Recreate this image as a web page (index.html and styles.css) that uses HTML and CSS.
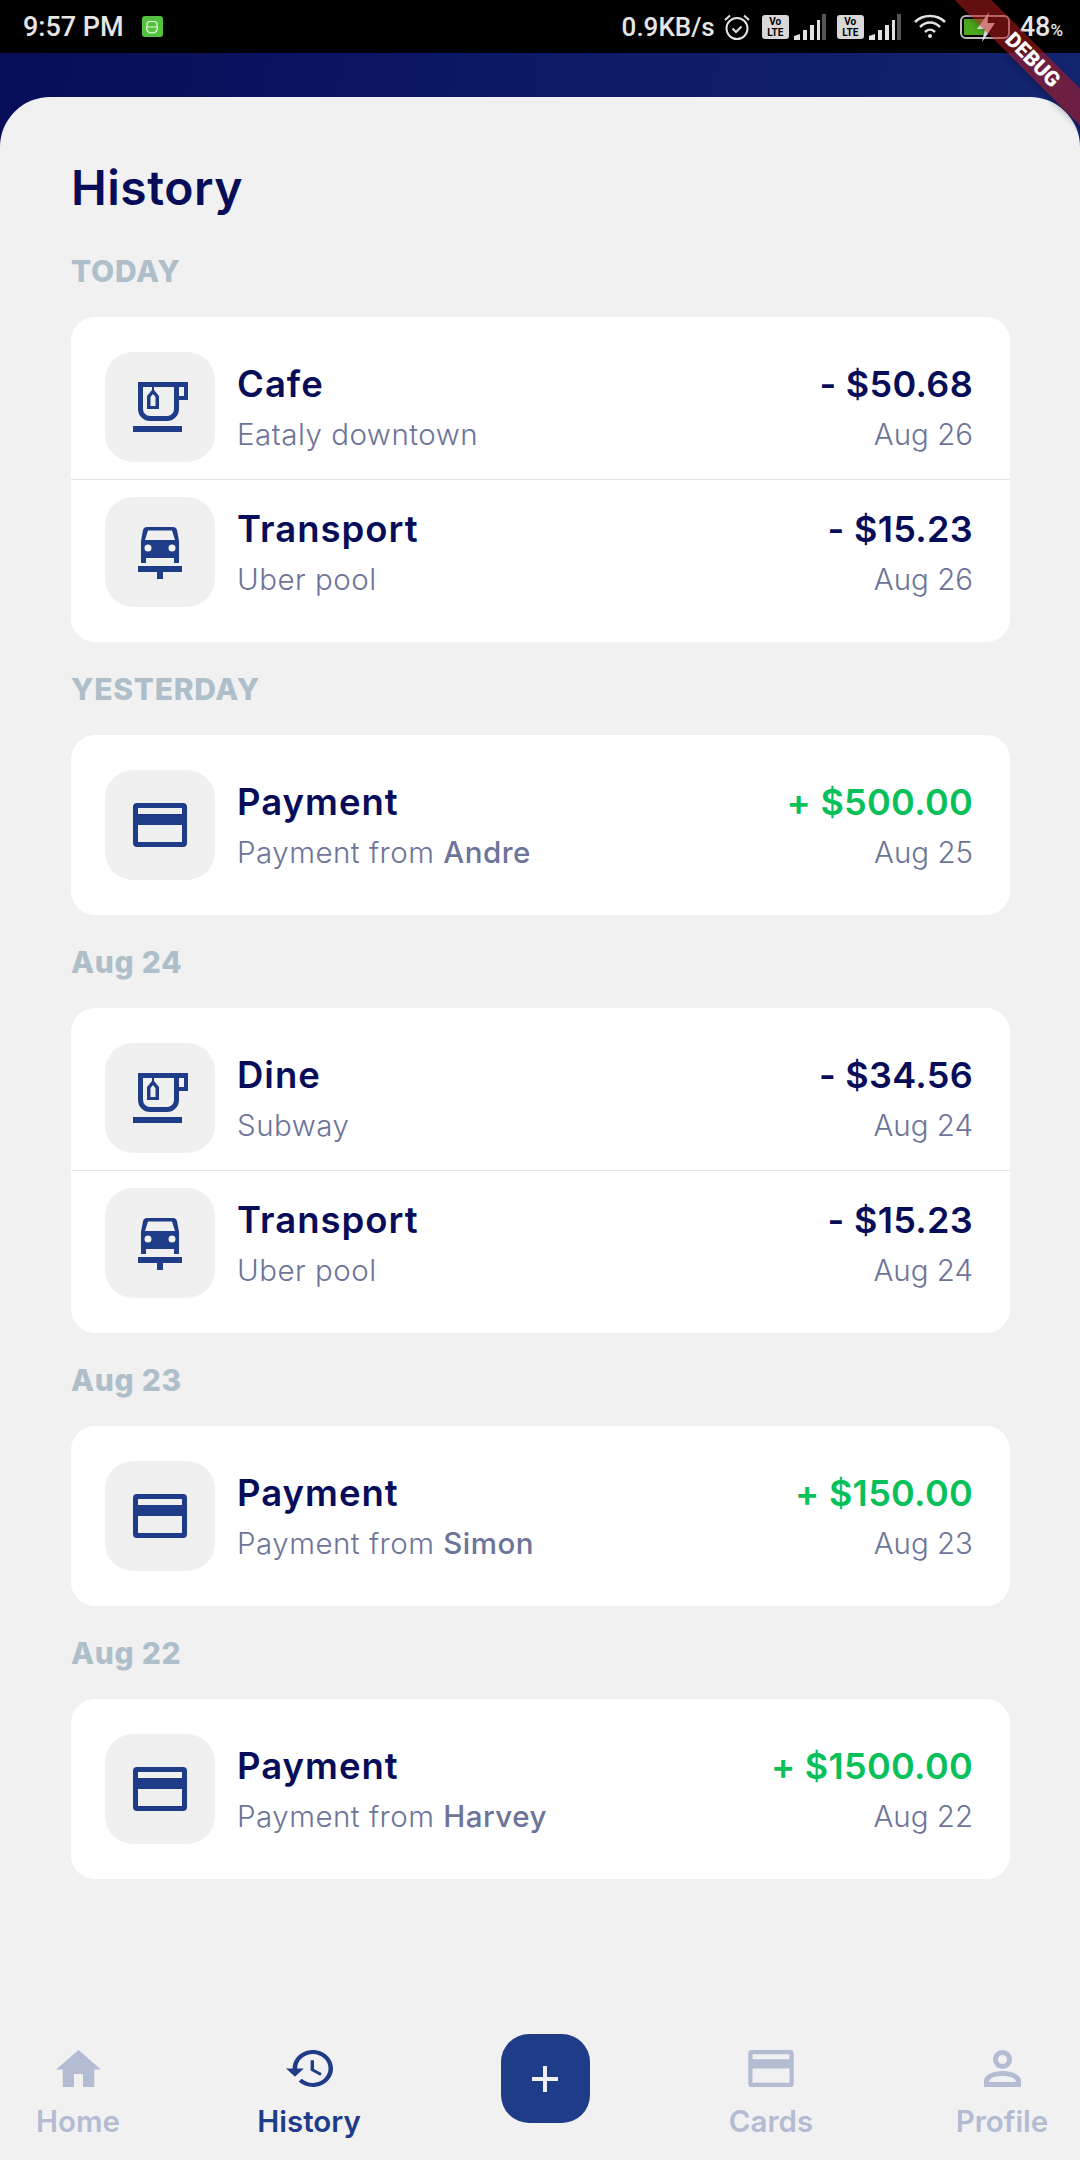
FILE: index.html
```html
<!DOCTYPE html>
<html lang="en">
<head>
    <meta charset="UTF-8">
    <meta name="viewport" content="width=device-width, initial-scale=1.0">
    <title>History</title>
    <link rel="stylesheet" href="styles.css">
</head>
<body>

    <svg class="icon-defs" width="0" height="0">
        <symbol id="icon-cup" viewBox="0 0 110 110">
            <path fill-rule="evenodd" d="M33 30H83V48H74V57A12 12 0 0 1 62 69H45A12 12 0 0 1 33 57ZM38 35V57A7 7 0 0 0 45 64H62A7 7 0 0 0 69 57V35ZM74 35V44H79V35Z"/>
            <path fill-rule="evenodd" d="M47 35H49V38L54 44V57H42V44L47 38ZM48 42L45.500 45V54H50.500V45Z"/>
            <rect x="28" y="74" width="49" height="6"/>
        </symbol>
        <symbol id="icon-car" viewBox="0 0 110 110">
            <path fill-rule="evenodd" d="M42 30H68Q71 30 72 33L74 44V66H69V61H41V66H36V44L38 33Q39 30 42 30ZM43 33.500 40 43H70L67 33.500ZM43 47.500A3.500 3.500 0 1 0 43 54.500A3.500 3.500 0 1 0 43 47.500ZM67 47.500A3.500 3.500 0 1 0 67 54.500A3.500 3.500 0 1 0 67 47.500Z"/>
            <rect x="33" y="69" width="44" height="6"/>
            <rect x="52" y="75" width="6" height="7"/>
        </symbol>
        <symbol id="icon-card" viewBox="28 33 54 44">
            <path fill-rule="evenodd" d="M32 33H78A4 4 0 0 1 82 37V73A4 4 0 0 1 78 77H32A4 4 0 0 1 28 73V37A4 4 0 0 1 32 33ZM33 38V44H77V38ZM33 55V72H77V55Z"/>
        </symbol>
    </svg>

    <div class="status-bar">
        <span class="status-time">9:57 PM</span>
        <span class="app-badge">
            <svg width="14" height="14" viewBox="0 0 14 14" fill="none" stroke="#e8f8e0" stroke-width="1.200"><path d="M2 7V3L4 1.500H10L12 3V7M1.500 7H12.500C12.500 11 10 13 7 13S1.500 11 1.500 7Z"/></svg>
        </span>
        <span class="status-speed">0.9KB/s</span>
        <svg class="status-alarm" width="28" height="28" viewBox="0 0 28 28" fill="none" stroke="#e2e2e2" stroke-width="2"><circle cx="14" cy="15.500" r="10.500"/><path d="M9.500 15.500 13 19 18.500 13.500M2 7 7 2.500M26 7 21 2.500"/></svg>
        <span class="volte">Vo<br>LTE</span>
        <svg class="signal" width="32" height="26" viewBox="0 0 32 26"><path fill="#e2e2e2" d="M0 26V22L6 20V26ZM9 26V16H13V26ZM16 26V11H20V26ZM23 26V6H26V26Z"/><rect x="28" y="0" width="4" height="26" fill="#555"/></svg>
        <span class="volte">Vo<br>LTE</span>
        <svg class="signal" width="32" height="26" viewBox="0 0 32 26"><path fill="#e2e2e2" d="M0 26V22L6 20V26ZM9 26V16H13V26ZM16 26V11H20V26ZM23 26V6H26V26Z"/><rect x="28" y="0" width="4" height="26" fill="#555"/></svg>
        <svg class="status-wifi" width="34" height="28" viewBox="0 0 34 28" fill="none" stroke="#e2e2e2" stroke-width="2.500"><path d="M1 9C9 1 23 1 31 9M6 14C12 8 20 8 26 14M11 19C14 16 18 16 21 19"/><circle cx="16" cy="23" r="2" fill="#e2e2e2" stroke="none"/></svg>
        <span class="battery">
            <span class="battery-fill"></span>
            <svg class="battery-bolt" width="20" height="30" viewBox="0 0 20 30"><path fill="#f2f2f2" d="M13 0 1 17H9L6 30 19 11H11Z"/></svg>
        </span>
        <span class="status-level">48<small>%</small></span>
    </div>

    <div class="debug-banner"><span>DEBUG</span></div>

    <div class="app-top">
        <main class="sheet">
            <h1>History</h1>

            <section class="day">
                <h2>TODAY</h2>
                <div class="card">
                    <div class="row first">
                        <div class="row-icon"><svg><use href="#icon-cup"/></svg></div>
                        <div class="row-text"><div class="row-title">Cafe</div><div class="row-sub">Eataly downtown</div></div>
                        <div class="row-right"><div class="amount">- $50.68</div><div class="row-sub">Aug 26</div></div>
                    </div>
                    <div class="row last">
                        <div class="row-icon"><svg><use href="#icon-car"/></svg></div>
                        <div class="row-text"><div class="row-title">Transport</div><div class="row-sub">Uber pool</div></div>
                        <div class="row-right"><div class="amount">- $15.23</div><div class="row-sub">Aug 26</div></div>
                    </div>
                </div>
            </section>

            <section class="day">
                <h2>YESTERDAY</h2>
                <div class="card">
                    <div class="row only">
                        <div class="row-icon"><svg class="card-glyph"><use href="#icon-card"/></svg></div>
                        <div class="row-text"><div class="row-title">Payment</div><div class="row-sub">Payment from <b>Andre</b></div></div>
                        <div class="row-right"><div class="amount plus">+ $500.00</div><div class="row-sub">Aug 25</div></div>
                    </div>
                </div>
            </section>

            <section class="day">
                <h2>Aug 24</h2>
                <div class="card">
                    <div class="row first">
                        <div class="row-icon"><svg><use href="#icon-cup"/></svg></div>
                        <div class="row-text"><div class="row-title">Dine</div><div class="row-sub">Subway</div></div>
                        <div class="row-right"><div class="amount">- $34.56</div><div class="row-sub">Aug 24</div></div>
                    </div>
                    <div class="row last">
                        <div class="row-icon"><svg><use href="#icon-car"/></svg></div>
                        <div class="row-text"><div class="row-title">Transport</div><div class="row-sub">Uber pool</div></div>
                        <div class="row-right"><div class="amount">- $15.23</div><div class="row-sub">Aug 24</div></div>
                    </div>
                </div>
            </section>

            <section class="day">
                <h2>Aug 23</h2>
                <div class="card">
                    <div class="row only">
                        <div class="row-icon"><svg class="card-glyph"><use href="#icon-card"/></svg></div>
                        <div class="row-text"><div class="row-title">Payment</div><div class="row-sub">Payment from <b>Simon</b></div></div>
                        <div class="row-right"><div class="amount plus">+ $150.00</div><div class="row-sub">Aug 23</div></div>
                    </div>
                </div>
            </section>

            <section class="day">
                <h2>Aug 22</h2>
                <div class="card">
                    <div class="row only">
                        <div class="row-icon"><svg class="card-glyph"><use href="#icon-card"/></svg></div>
                        <div class="row-text"><div class="row-title">Payment</div><div class="row-sub">Payment from <b>Harvey</b></div></div>
                        <div class="row-right"><div class="amount plus">+ $1500.00</div><div class="row-sub">Aug 22</div></div>
                    </div>
                </div>
            </section>

            <nav class="bottom-nav">
                <div class="nav-item">
                    <svg class="nav-icon" width="45" height="39" viewBox="2 3 20 17" preserveAspectRatio="none"><path d="M10 20v-6h4v6h5v-8h3L12 3 2 12h3v8z"/></svg>
                    <span>Home</span>
                </div>
                <div class="nav-item active">
                    <svg class="nav-icon" width="47" height="41" viewBox="1 3 21 18" preserveAspectRatio="none"><path d="M13 3c-4.970 0-9 4.030-9 9H1l3.890 3.890.070.140L9 12H6c0-3.870 3.130-7 7-7s7 3.130 7 7-3.130 7-7 7c-1.930 0-3.680-.790-4.940-2.060l-1.420 1.420C8.270 19.990 10.510 21 13 21c4.970 0 9-4.030 9-9s-4.030-9-9-9zm-1 5v5l4.280 2.540.720-1.210-3.500-2.080V8H12z"/></svg>
                    <span>History</span>
                </div>
                <div class="nav-item">
                    <div class="add-button"><svg width="26" height="26" viewBox="0 0 26 26"><path fill="#f0f0f2" d="M11 0H15V11H26V15H15V26H11V15H0V11H11Z"/></svg></div>
                </div>
                <div class="nav-item">
                    <svg class="nav-icon" width="46" height="37"><use href="#icon-card"/></svg>
                    <span>Cards</span>
                </div>
                <div class="nav-item">
                    <svg class="nav-icon" width="37" height="37" viewBox="0 0 37 37"><path fill-rule="evenodd" d="M18.500 0A9.500 9.500 0 1 1 18.500 19A9.500 9.500 0 1 1 18.500 0ZM18.500 5A4.500 4.500 0 1 0 18.500 14A4.500 4.500 0 1 0 18.500 5ZM18.500 21C28 21 37 25 37 31V37H0V31C0 25 9 21 18.500 21ZM18.500 26C11 26 5 28 5 32H32C32 28 26 26 18.500 26Z"/></svg>
                    <span>Profile</span>
                </div>
            </nav>
        </main>
    </div>

</body>
</html>
```

FILE: styles.css
```css
* {
    box-sizing: border-box;
}
html, body {
    height: 100%;
}
body {
    margin: 0;
    background-color: #000000;
    font-family: Inter, "Open Sans", sans-serif;
    color: #070d59;
    display: flex;
    flex-direction: column;
    position: relative;
    overflow: hidden;
}
.icon-defs {
    position: absolute;
}

/* Status bar */
.status-bar {
    height: 53px;
    flex-shrink: 0;
    display: flex;
    align-items: center;
    padding: 0 17px 0 23px;
    background-color: #000000;
    color: #e6e6e6;
    font-family: Roboto, sans-serif;
    font-weight: 500;
    font-size: 27px;
}
.app-badge {
    width: 21px;
    height: 21px;
    margin-left: 18px;
    border-radius: 3px;
    background-color: #53c23f;
    display: flex;
    align-items: center;
    justify-content: center;
}
.status-speed {
    margin-left: auto;
    font-size: 26px;
}
.status-alarm {
    margin-left: 8px;
}
.volte {
    width: 27px;
    height: 24px;
    margin-left: 11px;
    border-radius: 3px;
    background-color: #d8d8d8;
    color: #000000;
    font-size: 10px;
    font-weight: 700;
    line-height: 11px;
    text-align: center;
    padding-top: 1px;
}
.signal {
    margin-left: 5px;
}
.status-wifi {
    margin-left: 13px;
}
.battery {
    width: 50px;
    height: 24px;
    margin-left: 12px;
    border: 2px solid #bdbdbd;
    border-radius: 6px;
    padding: 2px;
    position: relative;
}
.battery-fill {
    display: block;
    width: 24px;
    height: 100%;
    background-color: #4ca81e;
}
.battery-bolt {
    position: absolute;
    left: 14px;
    top: -5px;
}
.status-level {
    margin-left: 10px;
}
.status-level small {
    font-size: 17px;
}

/* Flutter debug ribbon */
.debug-banner {
    position: absolute;
    top: 39px;
    right: -55px;
    width: 220px;
    height: 26px;
    padding-left: 22px;
    transform: rotate(45deg);
    background-color: rgba(183, 28, 28, 0.55);
    box-shadow: 0 2px 6px rgba(0, 0, 0, 0.25);
    display: flex;
    align-items: center;
    justify-content: center;
    color: #ffffff;
    font-family: Roboto, sans-serif;
    font-weight: 900;
    font-size: 21px;
}

/* Page */
.app-top {
    flex: 1;
    padding-top: 44px;
    background: linear-gradient(100deg, #070d59, #1f3c88 150%);
    display: flex;
}
.sheet {
    flex: 1;
    background-color: #f1f1f2;
    border-radius: 50px 50px 0 0;
    padding: 61px 70px 0 71px;
    display: flex;
    flex-direction: column;
}
h1 {
    margin: 0;
    font-size: 48px;
    line-height: 60px;
    font-weight: 600;
    letter-spacing: 0.5px;
}
.day {
    margin-top: 27px;
}
h1 + .day {
    margin-top: 33px;
}
h2 {
    margin: 0 0 26px;
    height: 40px;
    font-size: 30px;
    line-height: 40px;
    font-weight: 800;
    letter-spacing: 0.7px;
    color: #aebfc9;
}
.card {
    background-color: #ffffff;
    border-radius: 24px;
}
.row {
    display: flex;
    align-items: center;
    padding: 35px 37px 35px 34px;
}
.row.first {
    padding-bottom: 17px;
    border-bottom: 1px solid #e4e4e6;
}
.row.last {
    padding-top: 17px;
}
.row-icon {
    width: 110px;
    height: 110px;
    flex-shrink: 0;
    border-radius: 28px;
    background-color: #f0f0f1;
    display: flex;
    align-items: center;
    justify-content: center;
}
.row-icon svg {
    width: 110px;
    height: 110px;
    fill: #1f3c88;
}
.row-icon .card-glyph {
    width: 54px;
    height: 44px;
}
.row-text {
    flex: 1;
    margin-left: 22px;
    padding-top: 4px;
}
.row-title {
    font-size: 36.500px;
    line-height: 50px;
    font-weight: 600;
    letter-spacing: 1px;
}
.row-sub {
    font-size: 29.500px;
    line-height: 50px;
    font-weight: 300;
    letter-spacing: 0.5px;
    color: #6d7499;
}
.row-sub b {
    font-weight: 500;
}
.row-right {
    text-align: right;
    padding-top: 4px;
}
.row-right .row-sub {
    letter-spacing: 0;
}
.amount {
    font-size: 36px;
    line-height: 50px;
    font-weight: 600;
    letter-spacing: 0.3px;
}
.amount.plus {
    color: #06c15a;
}

/* Bottom navigation */
.bottom-nav {
    margin: auto -70px 0 -71px;
    height: 126px;
    flex-shrink: 0;
    display: flex;
    justify-content: space-between;
    align-items: flex-start;
}
.nav-item {
    width: 156px;
    display: flex;
    flex-direction: column;
    align-items: center;
    padding-top: 16px;
    color: #b3bcd3;
    fill: #b3bcd3;
    font-size: 29.500px;
    line-height: 40px;
    font-weight: 600;
}
.nav-item.active {
    color: #1f3c88;
    fill: #1f3c88;
}
.nav-icon {
    height: 37px;
    margin-bottom: 14px;
}
.add-button {
    width: 89px;
    height: 89px;
    margin: -16px 0 0 10px;
    border-radius: 28px;
    background-color: #1f3c88;
    display: flex;
    align-items: center;
    justify-content: center;
}
```
